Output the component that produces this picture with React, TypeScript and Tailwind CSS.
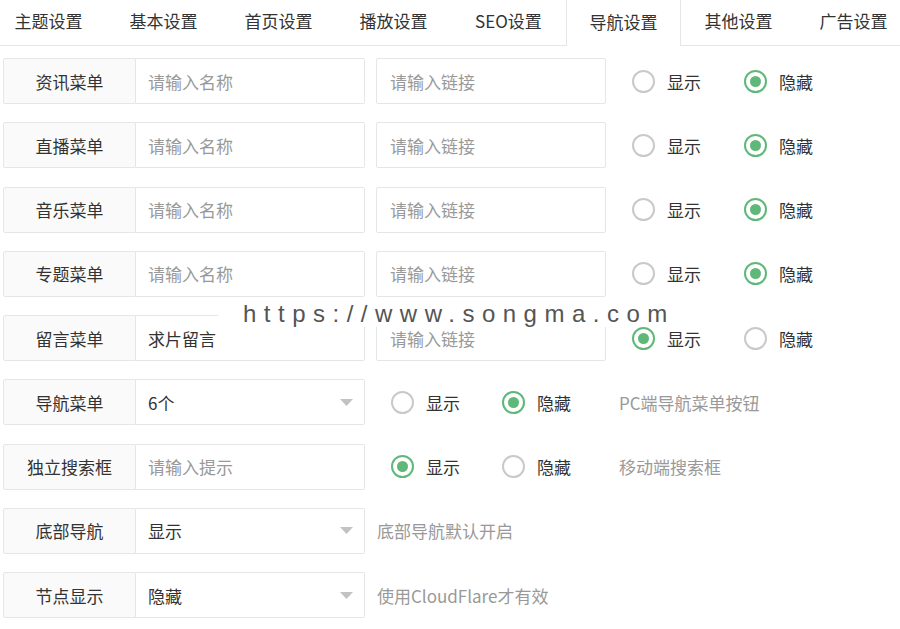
import React from "react";

const tabs = ["主题设置", "基本设置", "首页设置", "播放设置", "SEO设置", "导航设置", "其他设置", "广告设置"];

type MenuRow = { label: string; name?: string; show: boolean };

const menuRows: MenuRow[] = [
  { label: "资讯菜单", show: false },
  { label: "直播菜单", show: false },
  { label: "音乐菜单", show: false },
  { label: "专题菜单", show: false },
  { label: "留言菜单", name: "求片留言", show: true },
];

function Radio({ checked, label }: { checked: boolean; label: string }) {
  return (
    <div className="flex items-center">
      <span
        className={
          checked
            ? "w-[23px] h-[23px] rounded-full border-2 border-[#5fb878] flex items-center justify-center"
            : "w-[23px] h-[23px] rounded-full border-2 border-[#c9c9c9]"
        }
      >
        {checked && <span className="w-[11px] h-[11px] rounded-full bg-[#5fb878]" />}
      </span>
      <span className="ml-[12px] text-[#333]">{label}</span>
    </div>
  );
}

function Label({ children }: { children: React.ReactNode }) {
  return (
    <div className="w-[133px] h-full flex items-center justify-center bg-[#fafafa] border border-[#e6e6e6] rounded-l-[2px] text-[#333]">
      {children}
    </div>
  );
}

function Field({ value, placeholder, select }: { value?: string; placeholder?: string; select?: boolean }) {
  return (
    <div className="w-[229px] h-full flex items-center justify-between pl-[12px] pr-[11px] bg-white border border-l-0 border-[#e6e6e6] rounded-r-[2px]">
      <span className={value ? "text-[#333]" : "text-[#999]"}>{value ?? placeholder}</span>
      {select && (
        <svg width="13" height="7" viewBox="0 0 13 7">
          <path d="M0 0h13L6.5 7z" fill="#c2c2c2" />
        </svg>
      )}
    </div>
  );
}

export default function App() {
  return (
    <div
      className="relative w-[900px] h-[629px] overflow-hidden bg-white text-[17px] leading-none"
      style={{ fontFamily: '"Noto Sans CJK SC", "Liberation Sans", sans-serif' }}
    >
      {/* tab bar */}
      <div className="flex h-[46px] border-b border-[#e6e6e6] ml-[-9px]">
        {tabs.map((t, i) => (
          <div
            key={t}
            className={
              i === 5
                ? "shrink-0 w-[115px] h-[46px] -mb-px flex items-center justify-center pb-[4px] bg-white border-x border-[#e6e6e6] text-[#333]"
                : "shrink-0 w-[115px] flex items-center justify-center pb-[4px] text-[#333]"
            }
          >
            {t}
          </div>
        ))}
      </div>

      <div className="flex flex-col gap-[18.25px] mt-[12px] pl-[3px]">
        {menuRows.map((r) => (
          <div key={r.label} className="flex items-center h-[46px]">
            <Label>{r.label}</Label>
            <Field value={r.name} placeholder="请输入名称" />
            <div className="ml-[11px] w-[230px] h-full flex items-center pl-[13px] border border-[#e6e6e6] rounded-[2px] text-[#999]">
              请输入链接
            </div>
            <div className="ml-[26px] flex items-center gap-[43px]">
              <Radio checked={r.show} label="显示" />
              <Radio checked={!r.show} label="隐藏" />
            </div>
          </div>
        ))}

        <div className="flex items-center h-[46px]">
          <Label>导航菜单</Label>
          <Field value="6个" select />
          <div className="ml-[26px] flex items-center gap-[42px]">
            <Radio checked={false} label="显示" />
            <Radio checked label="隐藏" />
          </div>
          <span className="ml-[48px] text-[#999]">PC端导航菜单按钮</span>
        </div>

        <div className="flex items-center h-[46px]">
          <Label>独立搜索框</Label>
          <Field placeholder="请输入提示" />
          <div className="ml-[26px] flex items-center gap-[42px]">
            <Radio checked label="显示" />
            <Radio checked={false} label="隐藏" />
          </div>
          <span className="ml-[48px] text-[#999]">移动端搜索框</span>
        </div>

        <div className="flex items-center h-[46px]">
          <Label>底部导航</Label>
          <Field value="显示" select />
          <span className="ml-[12px] text-[#999]">底部导航默认开启</span>
        </div>

        <div className="flex items-center h-[46px]">
          <Label>节点显示</Label>
          <Field value="隐藏" select />
          <span className="ml-[12px] text-[#999]">使用CloudFlare才有效</span>
        </div>
      </div>

      {/* watermark */}
      <div
        className="absolute left-[218px] top-[301px] w-[455px] h-[26px] bg-white pl-[25px] text-[24px] leading-[26px] tracking-[7.5px] text-[#555]"
        style={{ fontFamily: '"Liberation Sans", sans-serif' }}
      >
        https://www.songma.com
      </div>
    </div>
  );
}
